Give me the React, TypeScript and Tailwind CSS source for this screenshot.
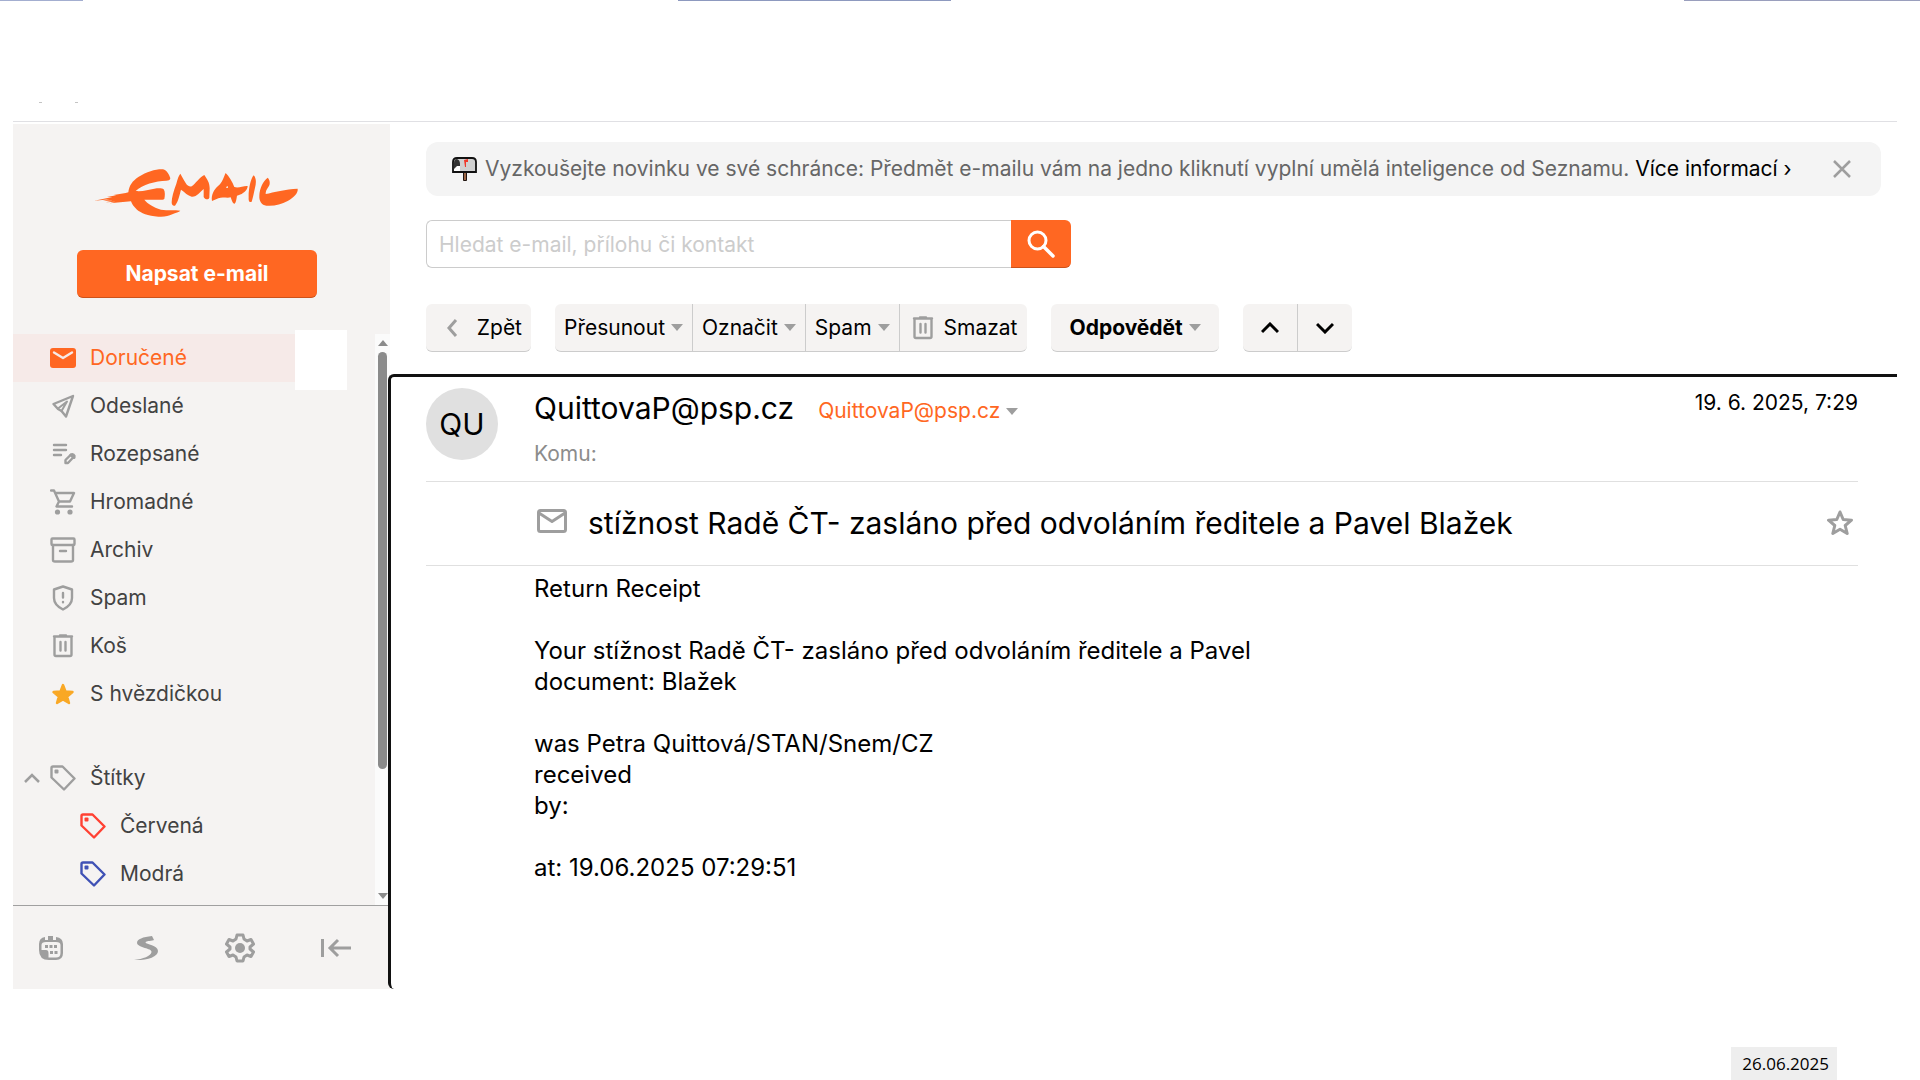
import React, { useState } from 'react';

const EmailLogo = () => (
  <svg viewBox="0 0 690 210" className="h-[70px] w-[230px]" fill="#ff6722" aria-label="Email" role="img">
    <path d="M148 112 C150 92 160 78 178 66 C205 50 230 42 252 43 C264 46 270 58 274 70 C273 76 268 77 262 77 C230 78 190 88 170 108 C192 110 208 104 226 101 C238 99 250 99 254 103 C259 110 258 124 256 132 C254 135 248 134 240 134 L196 134 C206 146 222 156 246 164 C266 167 288 164 304 167 C300 172 290 172 280 178 C268 184 256 186 238 185 C206 182 186 174 174 164 C164 155 158 146 156 139 L92 145 L108 140 L80 142 L100 137 L72 137 L92 133 L46 137 L100 126 L84 126 L112 121 L104 120 L140 114 Z" />
    <path d="M278 142 C278 128 284 108 292 86 C296 70 300 60 304 56 C310 66 314 74 320 84 C324 92 332 96 338 94 C350 86 362 66 376 60 C384 72 392 82 392 100 L391 128 C388 136 378 134 374 126 L374 102 C362 112 354 126 338 125 C326 122 318 112 306 104 C302 118 298 140 288 152 C282 154 278 150 278 142 Z" />
    <path fillRule="evenodd" d="M399 138 C396 120 404 104 418 92 C430 84 434 66 440 54 C450 64 460 80 466 96 C480 100 492 92 506 93 C506 104 496 112 488 117 L474 122 C472 132 472 140 467 146 C460 146 458 134 455 127 C442 130 430 124 418 130 Z M441 98 C445 90 449 94 446 99 Z" />
    <path d="M509 128 C508 108 514 72 524 61 C532 68 532 84 528 98 C525 112 522 128 518 140 C512 144 508 138 509 128 Z" />
    <path d="M541 122 C542 100 552 78 566 68 C574 76 574 88 568 96 C562 104 560 110 560 117 C584 112 620 102 656 101 C658 114 644 128 626 138 C606 148 586 154 562 152 C548 150 540 138 541 122 Z" />
  </svg>
);

interface IconProps {
  className?: string;
  children: React.ReactNode;
}

const Icon: React.FC<IconProps> = ({ className = 'text-[#9e9e9e]', children }) => (
  <svg
    viewBox="0 0 26 26"
    className={`size-[26px] shrink-0 ${className}`}
    fill="none"
    stroke="currentColor"
    strokeWidth="2.4"
    strokeLinecap="round"
    strokeLinejoin="round"
    aria-hidden="true"
  >
    {children}
  </svg>
);

const TagIcon = ({ className }: { className?: string }) => (
  <Icon className={className}>
    <path d="M3 1.500 H12.500 L24.500 13.500 L14 24.500 L1.500 12.500 V3 Q1.500 1.500 3 1.500 Z" />
    <rect x="4.500" y="4.500" width="4" height="4" rx="1" fill="currentColor" stroke="none" />
  </Icon>
);

const TrashIcon = () => (
  <Icon>
    <path d="M4.500 4 V21.500 Q4.500 23 6 23 H20 Q21.500 23 21.500 21.500 V4 M4 3.500 H22 M10 2.500 H16" />
    <path d="M10.500 9 V17.500 M15.500 9 V17.500" />
  </Icon>
);

const Caret = () => (
  <svg viewBox="0 0 12 7" className="h-[7px] w-3 shrink-0" aria-hidden="true">
    <path d="M0 0 H12 L6 7 Z" fill="#9e9e9e" />
  </svg>
);

const folders = [
  {
    name: 'Odeslané',
    icon: (
      <Icon>
        <path d="M23 3 L3.500 11 L8 16 L11.500 18 L16 23.500 Z" />
        <path d="M8 15.500 L17 8.500 L11.500 18" strokeWidth="2" />
      </Icon>
    ),
  },
  {
    name: 'Rozepsané',
    icon: (
      <Icon>
        <path d="M4 4 H16 M4 9 H16 M4 14 H11" />
        <path d="M15.500 22 V19 L21 13.500 Q23.500 12.500 24.500 15 L18 22 Z" />
        <path d="M21 14 L24 16.500" strokeWidth="3" />
      </Icon>
    ),
  },
  {
    name: 'Hromadné',
    icon: (
      <Icon>
        <path d="M1 1.500 H4 L9 12.500 H20 L24 4 H5.500 M9 12.500 L6.500 17.500 H22" />
        <circle cx="7.500" cy="23" r="2.600" fill="currentColor" stroke="none" />
        <circle cx="20" cy="23" r="2.600" fill="currentColor" stroke="none" />
      </Icon>
    ),
  },
  {
    name: 'Archiv',
    icon: (
      <Icon>
        <rect x="1.500" y="1.500" width="23" height="6.500" rx="1" />
        <path d="M3 8 V23 Q3 24.500 5 24.500 H21 Q23 24.500 23 23 V8 M10 14 H16" />
      </Icon>
    ),
  },
  {
    name: 'Spam',
    icon: (
      <Icon>
        <path d="M13 1.500 L22 4.500 V13 C22 18 18 22 13 24.500 C8 22 4 18 4 13 V4.500 Z" />
        <path d="M13 8 V12.500 M13 17 V17.200" />
      </Icon>
    ),
  },
  { name: 'Koš', icon: <TrashIcon /> },
  {
    name: 'S hvězdičkou',
    icon: (
      <Icon className="text-[#f9a825]">
        <path
          d="M13 4 L15.500 10.500 L22.500 11 L17.200 15.500 L19 22 L13 18.500 L7 22 L8.800 15.500 L3.500 11 L10.500 10.500 Z"
          fill="currentColor"
        />
      </Icon>
    ),
  },
];

const labels = [
  { name: 'Červená', color: 'text-[#ff4133]' },
  { name: 'Modrá', color: 'text-[#3f51b5]' },
];

const messageBody = `Return Receipt

Your stížnost Radě ČT- zasláno před odvoláním ředitele a Pavel
document: Blažek

was Petra Quittová/STAN/Snem/CZ
received
by:

at: 19.06.2025 07:29:51`;

const Sidebar = () => (
  <aside className="flex w-[377px] shrink-0 flex-col bg-[#f5f3f2] text-[21px] text-[#424242]">
    <div className="flex h-[210px] flex-col items-start pt-[31px]">
      <a href="#" className="ml-[66px] block">
        <EmailLogo />
      </a>
      <button
        type="button"
        className="mt-[25px] ml-16 h-12 w-60 rounded-md border-b border-[#cc521b] bg-[#ff6722] font-bold text-white"
      >
        Napsat e-mail
      </button>
    </div>
    <div className="flex flex-1">
      <nav className="flex-1">
        <a href="#" className="relative flex h-12 items-center gap-[14px] bg-[#f6eae8] pl-[37px] text-[#ff6722]">
          <Icon>
            <rect x="0" y="3" width="26" height="20" rx="3" fill="#ff6722" stroke="none" />
            <path d="M4 7.500 L13 13 L22 7.500" stroke="#f6eae8" />
          </Icon>
          Doručené
          <span className="absolute top-0 right-0 h-12 w-7 bg-[#f5f3f2]" />
          <span className="absolute -top-1 right-7 h-[60px] w-[52px] bg-white" />
        </a>
        {folders.map((folder) => (
          <a key={folder.name} href="#" className="flex h-12 items-center gap-[14px] pl-[37px]">
            {folder.icon}
            {folder.name}
          </a>
        ))}
        <a href="#" className="mt-9 flex h-12 items-center pl-[11px]">
          <svg viewBox="0 0 16 10" className="mr-[10px] h-[10px] w-4" fill="none" stroke="#9e9e9e" strokeWidth="2.5" aria-hidden="true">
            <path d="M1 9 L8 2 L15 9" />
          </svg>
          <TagIcon />
          <span className="ml-[14px]">Štítky</span>
        </a>
        {labels.map((label) => (
          <a key={label.name} href="#" className="flex h-12 items-center gap-[14px] pl-[67px]">
            <TagIcon className={label.color} />
            {label.name}
          </a>
        ))}
      </nav>
      <div className="flex w-[15px] flex-col items-center justify-between bg-[#fbfbfb] py-[6px]">
        <svg viewBox="0 0 10 6" className="h-[6px] w-[10px]" aria-hidden="true">
          <path d="M0 6 H10 L5 0 Z" fill="#8b8b8b" />
        </svg>
        <div className="mt-[6px] mb-auto h-[417px] w-[9px] rounded-full bg-[#8b8b8b]" />
        <svg viewBox="0 0 10 6" className="h-[6px] w-[10px]" aria-hidden="true">
          <path d="M0 0 H10 L5 6 Z" fill="#8b8b8b" />
        </svg>
      </div>
    </div>
    <div className="flex h-[84px] items-center justify-between border-t border-[#a0a0a0] pr-[39px] pl-[25px]">
      <button type="button" aria-label="Kalendář">
        <Icon>
          <path
            fillRule="evenodd"
            stroke="none"
            fill="currentColor"
            d="M7 2 V5 H10 V1 H15 V5 H18 V2 Q25 3 25 9 V18 Q25 25 18 25 H11 Q1 25 1 15 V9 Q1 3 7 2 Z M8 7 Q3.500 7 3.500 10 V15 H8 Q10.500 15 10.500 18 V22.500 H18 Q22.500 22.500 22.500 18 V10 Q22.500 7 18 7 Z"
          />
          <path d="M7 11.500 H10 M11.500 11.500 H14.500 M16 11.500 H19 M12 17.500 H15 M16.500 17.500 H19.500" strokeLinecap="butt" strokeWidth="3" />
        </Icon>
      </button>
      <button type="button" aria-label="Seznam" className="ml-1">
        <Icon>
          <path
            d="M18 1 C9 2 3 4 3 8 C4 13 18 13 17.500 17 C17 21 9 24 0 25 C13 25.500 24 22 24 16 C24 10 12 9.500 11.500 7.500 C12 5.500 19 6 20 5 Z"
            fill="currentColor"
            stroke="none"
          />
        </Icon>
      </button>
      <button type="button" aria-label="Nastavení">
        <svg viewBox="0 0 30 30" className="h-[30px] w-[30px]" fill="none" stroke="#9e9e9e" strokeWidth="3" strokeLinejoin="round" aria-hidden="true">
          <path d="M12 2 H18 L19 6 L22 8 L26 6.500 L28.500 11 L25 14 V16 L28.500 19 L26 23.500 L22 22 L19 24 L18 28 H12 L11 24 L8 22 L4 23.500 L1.500 19 L5 16 V14 L1.500 11 L4 6.500 L8 8 L11 6 Z" />
          <circle cx="15" cy="15" r="5" fill="#9e9e9e" stroke="none" />
        </svg>
      </button>
      <button type="button" aria-label="Sbalit panel">
        <svg viewBox="0 0 30 20" className="h-5 w-[30px]" fill="none" stroke="#9e9e9e" strokeWidth="3" aria-hidden="true">
          <path d="M1.500 1 V19 M30 10 H9 M17 2 L9 10 L17 18" />
        </svg>
      </button>
    </div>
  </aside>
);

const Banner = () => (
  <div className="mr-4 flex h-[54px] items-center rounded-xl bg-[#f4f4f4] pl-[26px] text-[21px] whitespace-nowrap text-[#666]">
    <svg viewBox="0 0 25 24" className="mr-2 h-6 w-[25px] shrink-0" aria-hidden="true">
      <path d="M11.500 14 H14.500 V23.500 H11.500 Z" fill="#9a6444" stroke="#1f1410" />
      <path d="M1 15 V5 Q1 1 5 1 H20 Q24 1 24 5 V15 Z" fill="#d0d0d0" stroke="#111" strokeWidth="1.800" />
      <path d="M2 6 Q2 2 5 2 Q8 3 8 7 V9 H5 V12 L2 13 Z" fill="#333" />
      <path d="M5 9 H8 V14 H2 V12 Z" fill="#fff" />
      <path d="M12 3 L16 2 V5 H14 V10 H13 Z" fill="#f0382b" />
    </svg>
    <span>
      Vyzkoušejte novinku ve své schránce: Předmět e-mailu vám na jedno kliknutí vyplní umělá inteligence od Seznamu.{' '}
      <a href="#" className="text-black">Více informací ›</a>
    </span>
    <button type="button" aria-label="Zavřít" className="mr-[30px] ml-auto">
      <svg viewBox="0 0 18 18" className="size-[18px]" stroke="#9e9e9e" strokeWidth="2.5" aria-hidden="true">
        <path d="M1 1 L17 17 M17 1 L1 17" />
      </svg>
    </button>
  </div>
);

const SearchForm = () => {
  const [query, setQuery] = useState('');

  return (
    <form className="mt-6 flex h-12 w-[645px]" onSubmit={(e) => e.preventDefault()}>
      <input
        type="text"
        aria-label="Hledat"
        value={query}
        onChange={(e) => setQuery(e.target.value)}
        placeholder="Hledat e-mail, přílohu či kontakt"
        className="min-w-0 flex-1 rounded-l-md border border-r-0 border-[#ccc] bg-white px-3 pt-[2px] text-[21px] placeholder:text-[#ccc]"
      />
      <button
        type="submit"
        aria-label="Vyhledat"
        className="flex w-[60px] items-center justify-center rounded-r-md border-b border-[#cc521b] bg-[#ff6722]"
      >
        <svg viewBox="0 0 28 28" className="size-7" fill="none" stroke="#fff" strokeWidth="3" strokeLinecap="round" aria-hidden="true">
          <circle cx="10.500" cy="10.500" r="8.500" />
          <path d="M16.500 16.500 L26 26" strokeWidth="3.500" />
        </svg>
      </button>
    </form>
  );
};

const Toolbar = () => (
  <div className="mt-9 flex h-12 gap-6 text-[21px] text-black *:flex *:overflow-hidden *:rounded-md *:border-b *:border-[#ccc] *:bg-[#f5f3f2]">
    <button type="button" className="w-[105px] items-center justify-between pr-[9px] pl-5">
      <svg viewBox="0 0 12 18" className="h-[18px] w-3" fill="none" stroke="#9e9e9e" strokeWidth="3" aria-hidden="true">
        <path d="M10 1 L3 9 L10 17" />
      </svg>
      Zpět
    </button>
    <div className="divide-x divide-[#ccc]">
      {['Přesunout', 'Označit', 'Spam'].map((name) => (
        <button key={name} type="button" className="flex items-center gap-[6px] px-[9px]">
          {name}
          <Caret />
        </button>
      ))}
      <button type="button" className="flex items-center gap-[8px] px-[10px]">
        <TrashIcon />
        Smazat
      </button>
    </div>
    <button type="button" className="items-center gap-[6px] px-[18px] font-bold">
      Odpovědět
      <Caret />
    </button>
    <div className="divide-x divide-[#ccc]">
      <button type="button" aria-label="Předchozí" className="flex w-[55px] items-center justify-center">
        <svg viewBox="0 0 18 12" className="h-3 w-[18px]" fill="none" stroke="#000" strokeWidth="3" aria-hidden="true">
          <path d="M1 10 L9 2 L17 10" />
        </svg>
      </button>
      <button type="button" aria-label="Další" className="flex w-[54px] items-center justify-center">
        <svg viewBox="0 0 18 12" className="h-3 w-[18px]" fill="none" stroke="#000" strokeWidth="3" aria-hidden="true">
          <path d="M1 2 L9 10 L17 2" />
        </svg>
      </button>
    </div>
  </div>
);

const Message = () => (
  <article className="-ml-[2px] flex-1 rounded-l-md border-t-[3px] border-l-[3px] border-[#111] pr-[39px] pl-[35px]">
    <header className="flex h-[105px] border-b border-[#e0e0e0] pt-[11px]">
      <div className="flex size-[72px] items-center justify-center rounded-full bg-[#e0e0e0] text-[30px] text-black">QU</div>
      <div className="ml-9 flex-1">
        <div className="flex h-10 items-center">
          <h2 className="text-[30px] text-black">QuittovaP@psp.cz</h2>
          <button type="button" className="mt-[6px] ml-6 flex items-center gap-[6px] text-[21px] text-[#ff6722]">
            QuittovaP@psp.cz
            <Caret />
          </button>
        </div>
        <p className="mt-[10px] text-[21px] leading-8 text-[#8c8c8c]">Komu:</p>
      </div>
      <time className="text-[21px] leading-[30px] text-black">19. 6. 2025, 7:29</time>
    </header>
    <div className="flex h-[84px] items-center border-b border-[#e0e0e0] pl-[111px]">
      <svg viewBox="0 0 30 24" className="mb-[6px] h-6 w-[30px] shrink-0" fill="none" stroke="#9e9e9e" strokeWidth="3" strokeLinejoin="round" aria-hidden="true">
        <rect x="1.500" y="1.500" width="27" height="21" rx="2" />
        <path d="M2 4 L15 12.500 L28 4" />
      </svg>
      <h1 className="ml-[21px] text-[30px] text-black">stížnost Radě ČT- zasláno před odvoláním ředitele a Pavel Blažek</h1>
      <button type="button" aria-label="Označit hvězdičkou" className="mr-[5px] mb-[2px] ml-auto">
        <svg viewBox="0 0 26 26" className="size-[26px]" fill="none" stroke="#9e9e9e" strokeWidth="3" strokeLinejoin="round" aria-hidden="true">
          <path d="M13 2 L16.200 9.500 L24.500 10.200 L18.200 15.500 L20.200 23.500 L13 19.200 L5.800 23.500 L7.800 15.500 L1.500 10.200 L9.800 9.500 Z" />
        </svg>
      </button>
    </div>
    <p className="pt-[7px] pl-[108px] text-[24px] leading-[31px] whitespace-pre-line text-black">{messageBody}</p>
  </article>
);

export default function App() {
  return (
    <div className="flex min-h-screen flex-col bg-white font-['Inter',sans-serif]">
      <div className="flex h-px">
        <span className="w-[83px] bg-[#a3aed0]" />
        <span className="ml-[595px] w-[273px] bg-[#8d99bf]" />
        <span className="ml-auto w-[236px] bg-[#9a9fbd]" />
      </div>
      <div className="mt-[101px] flex h-px gap-[33px] pl-[39px]">
        <span className="w-[3px] bg-[#c4c4c4]" />
        <span className="w-[3px] bg-[#c4c4c4]" />
      </div>
      <main className="mt-[18px] mr-[23px] ml-[13px] border-t border-[#e0e0e4] pt-[2px]">
        <div className="flex min-h-[865px]">
          <Sidebar />
          <section className="flex min-w-0 flex-1 flex-col">
            <div className="pt-[18px] pl-9">
              <Banner />
              <SearchForm />
              <Toolbar />
            </div>
            <div className="mt-[22px] flex flex-1">
              <Message />
            </div>
          </section>
        </div>
      </main>
      <footer className="mt-auto flex justify-end pr-[83px]">
        <time className="bg-[#eee] pr-2 pl-[11px] font-['Open_Sans',sans-serif] text-[17px] leading-[33px] text-black">26.06.2025</time>
      </footer>
    </div>
  );
}
